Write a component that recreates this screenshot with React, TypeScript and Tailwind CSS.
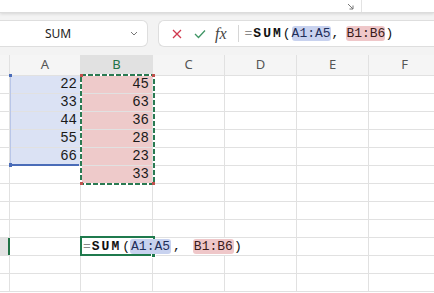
import { FC } from 'react';

const cols = ['A', 'B', 'C', 'D', 'E', 'F'];
const aVals = [22, 33, 44, 55, 66];
const bVals = [45, 63, 36, 28, 23, 33];
const rowCount = 12;

const mono = 'font-[family-name:Liberation_Mono,Courier_New,monospace]';

const Formula: FC<{ tight?: boolean }> = ({ tight }) => (
	<span className={`${mono} whitespace-nowrap text-[13px] text-[#111] leading-[15px]`}>
		<span className="text-[#8a8a8a]">=</span>
		<span className="ml-[1px] font-bold tracking-[2px]">SUM</span>
		<span className={tight ? 'mr-[1px]' : 'ml-[1px]'}>(</span>
		<span className={`rounded-[3px] bg-[#c8d2ef] text-[#1f2f5a] ${tight ? '' : 'px-[1px]'}`}>A1:A5</span>
		<span className={tight ? 'ml-[1px] mr-[7px]' : 'ml-[2px] mr-[12px]'}>,</span>
		<span className={`rounded-[3px] bg-[#efc7c9] text-[#3a1a1a] ${tight ? '' : 'px-[1px]'}`}>B1:B6</span>
		<span>)</span>
	</span>
);

const App: FC = () => {
	return (
		<div className="relative h-[293px] w-[434px] overflow-hidden bg-white font-[family-name:Noto_Sans,sans-serif]">
			{/* ribbon edge */}
			<div className="relative z-10 flex h-[13px] items-start border-b border-[#dcdcdc] bg-white shadow-[0_1px_3px_rgba(0,0,0,0.12)]">
				<svg className="ml-[347px] mt-[3px]" width="7" height="7" viewBox="0 0 7 7">
					<path d="M1 1l5 5M6 2.5V6H2.5" fill="none" stroke="#777" strokeWidth="1" />
				</svg>
				<div className="ml-[7px] h-[12px] w-px bg-[#e3e3e3]" />
			</div>

			{/* formula bar */}
			<div className="flex h-[42px] items-start gap-[10px] bg-[#f3f3f3] pt-[7px]">
				<div className="relative flex h-[27px] w-[148px] shrink-0 items-center rounded-r-[6px] border border-l-0 border-[#dedede] bg-white">
					<span className="ml-[45px] text-[12px] text-[#222]">SUM</span>
					<svg className="ml-auto mr-[9px]" width="8" height="5" viewBox="0 0 8 5">
						<path d="M1 1l3 3 3-3" fill="none" stroke="#777" strokeWidth="1" />
					</svg>
				</div>
				<div className="flex h-[27px] flex-1 items-center rounded-l-[6px] border border-r-0 border-[#dedede] bg-white">
					<svg className="ml-[13px]" width="10" height="10" viewBox="0 0 10 10">
						<path d="M1 1l8 8M9 1l-8 8" stroke="#d0384e" strokeWidth="1.3" />
					</svg>
					<svg className="ml-[12px]" width="12" height="10" viewBox="0 0 12 10">
						<path d="M1 5l3.5 3.5L11 1.5" fill="none" stroke="#3f9565" strokeWidth="1.3" />
					</svg>
					<span className="ml-[9px] font-[family-name:Liberation_Serif,serif] text-[16px] italic leading-none text-[#444]">
						fx
					</span>
					<div className="ml-[11px] h-[17px] w-px bg-[#d6d6d6]" />
					<div className="ml-[6px] flex items-center">
						<Formula tight />
					</div>
				</div>
			</div>

			{/* grid */}
			<div className="relative">
				<div className="flex h-[21px] border-b border-[#e1e1e1] bg-[#f5f5f5]">
					<div className="w-[10px] shrink-0 border-r border-[#e1e1e1]" />
					{cols.map((c, i) => (
						<div
							key={c}
							className={`flex shrink-0 items-center justify-center border-r border-[#e1e1e1] text-[13px] ${
								i === 0 ? 'w-[71px]' : 'w-[72px]'
							} ${c === 'B' ? 'bg-[#e1e1e1] text-[#217346]' : 'text-[#555]'}`}
						>
							{c}
						</div>
					))}
				</div>

				{Array.from({ length: rowCount }).map((_, r) => (
					<div key={r} className="flex h-[18px] border-b border-[#e1e1e1]">
						<div
							className={`w-[10px] shrink-0 ${
								r === 9 ? 'border-r-2 border-[#217346] bg-[#e3e3e3]' : 'border-r border-[#e1e1e1]'
							}`}
						/>
						{cols.map((c, i) => {
							const isA = c === 'A' && r < 5;
							const isB = c === 'B' && r < 6;
							const val = isA ? aVals[r] : isB ? bVals[r] : null;
							const noRight = r === 9 && (c === 'B' || c === 'C');
							return (
								<div
									key={c}
									className={`relative flex shrink-0 items-end justify-end pb-[2px] pr-[3px] ${
										i === 0 ? 'w-[71px]' : 'w-[72px]'
									} ${noRight ? '' : 'border-r border-[#e1e1e1]'} ${
										isA ? 'bg-[#dbe2f4]' : isB ? 'bg-[#eecaca]' : ''
									}`}
								>
									{val !== null && (
										<span className={`${mono} text-[14px] leading-none text-[#1a1a1a]`}>{val}</span>
									)}
									{r === 9 && c === 'B' && (
										<div className="absolute left-[2px] top-[1px] z-10 flex items-center">
											<Formula />
										</div>
									)}
								</div>
							);
						})}
					</div>
				))}

				{/* A1:A5 reference highlight */}
				<div className="absolute left-[10px] top-[20px] h-[91px] w-[69px] border-b-2 border-l border-[#4a6cb8] border-l-[#b9c6e8]" />
				<div className="absolute left-[9px] top-[19px] h-[3px] w-[3px] bg-[#4a6cb8]" />
				<div className="absolute left-[9px] top-[108px] h-[4px] w-[3px] bg-[#4a6cb8]" />

				{/* B1:B6 copy marquee */}
				<svg className="absolute left-[80px] top-[19px]" width="75" height="111" viewBox="0 0 75 111">
					<rect x="1" y="1" width="73" height="109" fill="none" stroke="#fff" strokeWidth="2" />
					<rect x="1" y="1" width="73" height="109" fill="none" stroke="#2a7a52" strokeWidth="2" strokeDasharray="5 2" />
					<rect x="0" y="0" width="3" height="3" fill="#c0504d" />
					<rect x="72" y="0" width="3" height="3" fill="#c0504d" />
					<rect x="0" y="108" width="3" height="3" fill="#c0504d" />
					<rect x="72" y="108" width="3" height="3" fill="#c0504d" />
				</svg>

				{/* active cell B10 */}
				<div className="absolute left-[80px] top-[181px] h-[20px] w-[75px] border-2 border-[#1f7a4d]" />
				<div className="absolute left-[151px] top-[198px] h-[5px] w-[5px] border border-white bg-[#1f7a4d]" />
			</div>
		</div>
	);
};

export default App;
